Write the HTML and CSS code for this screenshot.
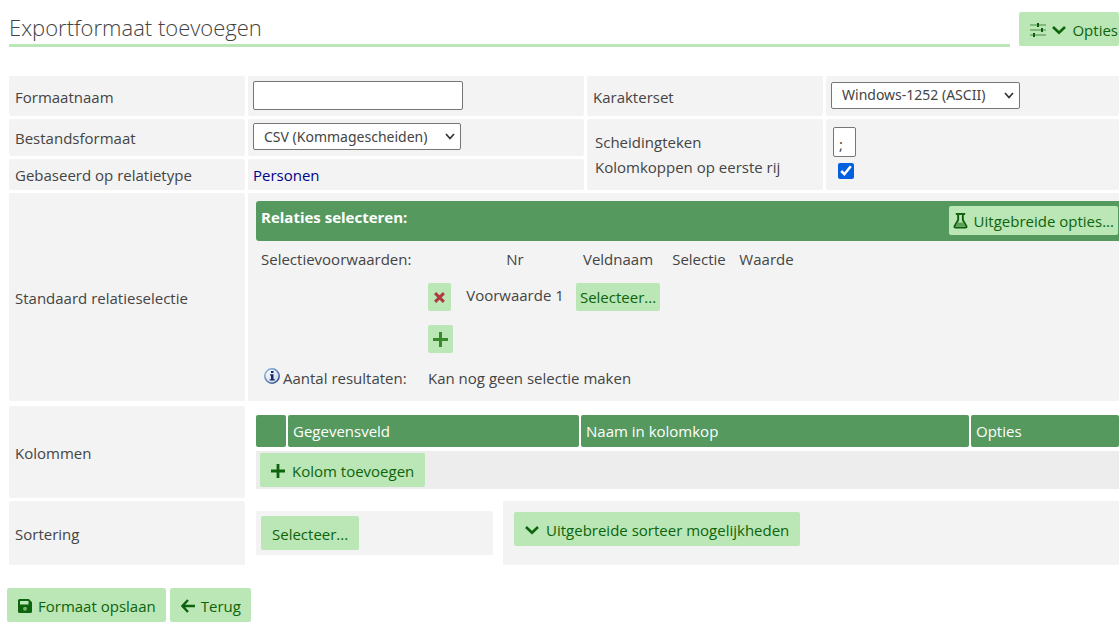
FILE: index.html
```html
<!DOCTYPE html>
<html lang="nl">
<head>
<meta charset="utf-8">
<meta name="viewport" content="width=device-width, initial-scale=1">
<title>Exportformaat toevoegen</title>
<link rel="stylesheet" href="styles.css">
</head>
<body>
<header class="page-head">
  <h1 class="page-title">Exportformaat toevoegen</h1>
  <button type="button" class="btn btn-options">
    <svg class="icon icon-sliders" viewBox="0 0 16 16" aria-hidden="true"><path d="M0 3h16M0 8h16M0 13h16" stroke="#6fab6b" stroke-width="1.6"/><path d="M8 1v4M12 6v4M4 11v4" stroke="#0c5c0c" stroke-width="2"/></svg>
    <svg class="icon icon-chevron" viewBox="0 0 14 14" aria-hidden="true"><path d="M1 4l6 5.800L13 4" fill="none" stroke="currentColor" stroke-width="2.600"/></svg>
    <span>Opties</span>
  </button>
</header>

<form class="export-form">
  <div class="form-grid">
    <div class="cell"><label for="name">Formaatnaam</label></div>
    <div class="cell cell-value"><input id="name" class="field field-name" type="text"></div>
    <div class="cell"><label for="charset">Karakterset</label></div>
    <div class="cell cell-value"><select id="charset" class="field select select-charset"><option>Windows-1252 (ASCII)</option></select></div>

    <div class="cell"><label for="type">Bestandsformaat</label></div>
    <div class="cell cell-value"><select id="type" class="field select select-type"><option>CSV (Kommagescheiden)</option></select></div>
    <div class="cell cell-tall stack">
      <label for="sep">Scheidingteken</label>
      <label for="heads">Kolomkoppen op eerste rij</label>
    </div>
    <div class="cell cell-tall stack stack-fields">
      <input id="sep" class="field field-sep" type="text" value=";">
      <input id="heads" class="check" type="checkbox" checked>
    </div>

    <div class="cell">Gebaseerd op relatietype</div>
    <div class="cell cell-link"><a class="link" href="#personen">Personen</a></div>

    <div class="cell">Standaard relatieselectie</div>
    <section class="selection">
      <div class="selection-head">
        <h2 class="selection-title">Relaties selecteren:</h2>
        <button type="button" class="btn btn-small">
          <svg class="icon icon-flask" viewBox="0 0 16 18" aria-hidden="true"><path d="M3 1.500h10" stroke="#0c5c0c" stroke-width="2"/><path d="M5.500 2v6L1.700 14.500q-.6 1.500 1 1.500h10.600q1.600 0 1-1.500L10.500 8V2" fill="none" stroke="#0c5c0c" stroke-width="2"/><path d="M4.500 10.500h7l2 4.500h-11z" fill="#5d9f58"/></svg>
          <span>Uitgebreide opties...</span>
        </button>
      </div>
      <table class="conditions">
        <colgroup><col class="c-label"><col class="c-action"><col class="c-nr"><col class="c-field"><col class="c-sel"><col class="c-value"></colgroup>
        <thead>
          <tr class="row-head"><th class="left">Selectievoorwaarden:</th><td></td><th>Nr</th><th>Veldnaam</th><th>Selectie</th><th>Waarde</th></tr>
        </thead>
        <tbody>
          <tr class="row-condition">
            <td></td>
            <td class="left"><button type="button" class="btn btn-icon" aria-label="Verwijderen"><svg class="icon icon-cross" viewBox="0 0 14 14" aria-hidden="true"><path d="M2.300 2.300l9.400 9.400M11.700 2.300l-9.400 9.400" stroke="#b03a40" stroke-width="3.200"/></svg></button></td>
            <td class="condition-name">Voorwaarde 1</td>
            <td><button type="button" class="btn btn-small">Selecteer...</button></td>
            <td></td><td></td>
          </tr>
          <tr class="row-add">
            <td></td>
            <td class="left" colspan="5"><button type="button" class="btn btn-icon" aria-label="Toevoegen"><svg class="icon icon-add" viewBox="0 0 14 14" aria-hidden="true"><path d="M7 0v14M0 7h14" stroke="#37892c" stroke-width="2.800"/></svg></button></td>
          </tr>
          <tr class="row-result">
            <td class="left"><span class="result-label"><svg class="icon icon-info" viewBox="0 0 16 16" aria-hidden="true"><defs><linearGradient id="ring" x2="1" y2="1"><stop offset="0" stop-color="#8fc0ee"/><stop offset="1" stop-color="#24407c"/></linearGradient><linearGradient id="disc" x2="1" y2="1"><stop offset="0" stop-color="#fff"/><stop offset="1" stop-color="#c9d3e2"/></linearGradient></defs><circle cx="8" cy="8" r="7.200" fill="url(#disc)" stroke="url(#ring)" stroke-width="1.500"/><path d="M7 3h2.500v2H7zM6 6.300h3.500v4.900h1.300v1.300H5.700v-1.300H7V7.600H6z" fill="#14266e"/></svg>Aantal resultaten:</span></td>
            <td class="left" colspan="5">Kan nog geen selectie maken</td>
          </tr>
        </tbody>
      </table>
    </section>
  </div>

  <div class="form-grid form-grid-wide">
    <div class="cell">Kolommen</div>
    <div class="columns">
      <table class="columns-table">
        <colgroup><col class="k-handle"><col class="k-field"><col class="k-name"><col></colgroup>
        <thead><tr><th></th><th>Gegevensveld</th><th>Naam in kolomkop</th><th>Opties</th></tr></thead>
        <tbody><tr><td colspan="4"><button type="button" class="btn"><svg class="icon" viewBox="0 0 14 14" aria-hidden="true"><path d="M7 0v14M0 7h14" stroke="currentColor" stroke-width="2.800"/></svg><span>Kolom toevoegen</span></button></td></tr></tbody>
      </table>
    </div>

    <div class="cell">Sortering</div>
    <div class="sorting">
      <div class="sort-pick"><button type="button" class="btn">Selecteer...</button></div>
      <div class="sort-more"><button type="button" class="btn"><svg class="icon icon-chevron" viewBox="0 0 14 14" aria-hidden="true"><path d="M1 4l6 5.800L13 4" fill="none" stroke="currentColor" stroke-width="2.600"/></svg><span>Uitgebreide sorteer mogelijkheden</span></button></div>
    </div>
  </div>

  <div class="actions">
    <button type="submit" class="btn"><svg class="icon" viewBox="0 0 14 14" aria-hidden="true"><path fill-rule="evenodd" d="M1.500 0h9.300L14 3.200v9.300q0 1.500-1.500 1.500h-11Q0 14 0 12.500v-11Q0 0 1.500 0zM2 2v3.600h8.500V2z" fill="currentColor"/><circle cx="7" cy="9.700" r="2" fill="#74b36f"/></svg><span>Formaat opslaan</span></button>
    <button type="button" class="btn"><svg class="icon" viewBox="0 0 14 14" aria-hidden="true"><path d="M7 1L1.500 7 7 13M1.500 7H14" fill="none" stroke="currentColor" stroke-width="2.400"/></svg><span>Terug</span></button>
  </div>
</form>
</body>
</html>
```
FILE: styles.css
```css
* {
  box-sizing: border-box;
}

body {
  margin: 0;
  padding: 12px 0 4px 9px;
  overflow-x: hidden;
  background: #fff;
  color: #444;
  font: 15px/20px "Open Sans", "Noto Sans", sans-serif;
}

.page-head {
  display: flex;
  align-items: flex-start;
  gap: 9px;
  margin-bottom: 29px;
}

.page-title {
  flex: 1;
  margin: 0;
  height: 35px;
  border-bottom: 3px solid #b9e6b4;
  font-size: 22px;
  font-weight: 300;
  line-height: 31px;
}

.btn {
  display: inline-flex;
  align-items: center;
  gap: 7px;
  min-height: 34px;
  padding: 2px 11px 0;
  border: 0;
  border-radius: 2px;
  background: #bbe6b5;
  color: #0c640c;
  font: inherit;
  white-space: nowrap;
}

.btn-options {
  gap: 6px;
  padding-right: 1px;
}

.btn-small {
  min-height: 28px;
  padding: 0 4px;
  gap: 6px;
}

.btn-icon {
  min-height: 28px;
  padding: 0 5px;
}

.icon {
  display: block;
  flex: none;
  width: 14px;
  height: 14px;
}

.icon-sliders {
  width: 16px;
  height: 16px;
}

.icon-flask {
  width: 15px;
  height: 18px;
}

.icon-cross {
  width: 13px;
  height: 13px;
}

.icon-add {
  width: 15px;
  height: 15px;
}

.icon-info {
  width: 16px;
  height: 16px;
}

.form-grid {
  display: grid;
  grid-template-columns: 236px 336px 236px minmax(0, 1fr);
  grid-template-rows: 40px 37px 31px auto;
  gap: 3px;
}

.form-grid-wide {
  grid-template-columns: 236px minmax(0, 1fr);
  grid-template-rows: auto;
  margin-top: 5px;
}

.cell {
  display: flex;
  align-items: center;
  padding: 1px 6px 0;
  border-radius: 2px;
  background: #f3f3f3;
}

.cell-value {
  padding: 0 5px 2px;
}

.cell-link {
  padding-left: 5px;
}

.cell-tall {
  grid-row: span 2;
}

.stack {
  flex-direction: column;
  align-items: flex-start;
  justify-content: center;
  gap: 5px;
  padding: 10px 8px;
}

.stack-fields {
  justify-content: flex-start;
  padding: 8px 7px;
  gap: 6px;
}

.field {
  border: 1px solid #767676;
  border-radius: 2px;
  background: #fff;
  color: #444;
  font: inherit;
}

.field-name {
  width: 210px;
  height: 29px;
}

.field-sep {
  width: 23px;
  height: 30px;
  padding: 4px 5px 0;
}

.select {
  height: 27px;
  padding: 0 10px;
  appearance: none;
  background: #fff url("data:image/svg+xml,%3Csvg xmlns='http://www.w3.org/2000/svg' width='10' height='7'%3E%3Cpath d='M1 1l4 4.500L9 1' fill='none' stroke='%23333' stroke-width='1.700'/%3E%3C/svg%3E") no-repeat right 5px center;
  font-family: "Noto Sans", "Open Sans", sans-serif;
  font-size: 14px;
}

.select-type {
  width: 208px;
}

.select-charset {
  width: 189px;
}

.check {
  width: 16px;
  height: 16px;
  margin: 0 5px;
  accent-color: #0060df;
}

.link {
  color: #00008b;
  text-decoration: none;
}

.selection {
  grid-column: 2 / -1;
  padding: 8px 0 6px 8px;
  border-radius: 2px;
  background: #f3f3f3;
}

.selection-head {
  display: flex;
  align-items: flex-start;
  justify-content: space-between;
  padding: 5px 1px 6px 5px;
  border-radius: 3px 0 0 3px;
  background: #55995f;
}

.selection-head .btn {
  min-height: 29px;
}

.selection-title {
  margin: 0;
  padding-top: 1px;
  color: #fff;
  font-size: 15px;
  font-weight: 700;
}

.conditions {
  table-layout: fixed;
  width: 540px;
  margin-left: 5px;
  border-collapse: collapse;
}

.conditions th,
.conditions td {
  height: 36px;
  padding: 0;
  font-weight: normal;
  text-align: center;
  white-space: nowrap;
}

.conditions .left {
  text-align: left;
}

.conditions .btn {
  vertical-align: middle;
}

.conditions .row-head th {
  height: 38px;
  padding-bottom: 2px;
}

.row-condition .condition-name {
  padding-bottom: 5px;
}

.conditions .row-add td {
  height: 48px;
}

.conditions .row-result td {
  height: 32px;
  padding-bottom: 2px;
}

.c-label {
  width: 167px;
}

.c-action {
  width: 32px;
}

.c-nr {
  width: 110px;
}

.c-field {
  width: 96px;
}

.c-sel {
  width: 66px;
}

.result-label {
  display: flex;
  align-items: center;
  gap: 3px;
  padding-left: 3px;
}

.result-label .icon {
  margin-bottom: 4px;
}

.columns {
  padding: 5px 0 5px 6px;
  margin-right: -2px;
}

.columns-table {
  table-layout: fixed;
  width: 100%;
  border-spacing: 2px 4px;
}

.columns-table th {
  height: 32px;
  padding: 0 5px;
  border-radius: 2px;
  background: #55995f;
  color: #fff;
  font-weight: normal;
  text-align: left;
}

.columns-table td {
  padding: 2px 4px;
  background: #ededed;
}

.columns-table .btn {
  vertical-align: middle;
}

.k-handle {
  width: 30px;
}

.k-field {
  width: 291px;
}

.k-name {
  width: 388px;
}

.sorting {
  display: flex;
  align-items: center;
  gap: 10px;
  padding-left: 8px;
}

.sort-pick {
  width: 237px;
  padding: 5px;
  border-radius: 2px;
  background: #f3f3f3;
}

.sort-more {
  flex: 1;
  padding: 11px 11px 19px;
  border-radius: 2px;
  background: #f3f3f3;
}

.sort-pick .btn,
.sort-more .btn {
  display: flex;
}

.actions {
  display: flex;
  gap: 4px;
  margin: 23px 0 0 -2px;
}

.actions .btn {
  gap: 6px;
  padding-right: 10px;
}
```
